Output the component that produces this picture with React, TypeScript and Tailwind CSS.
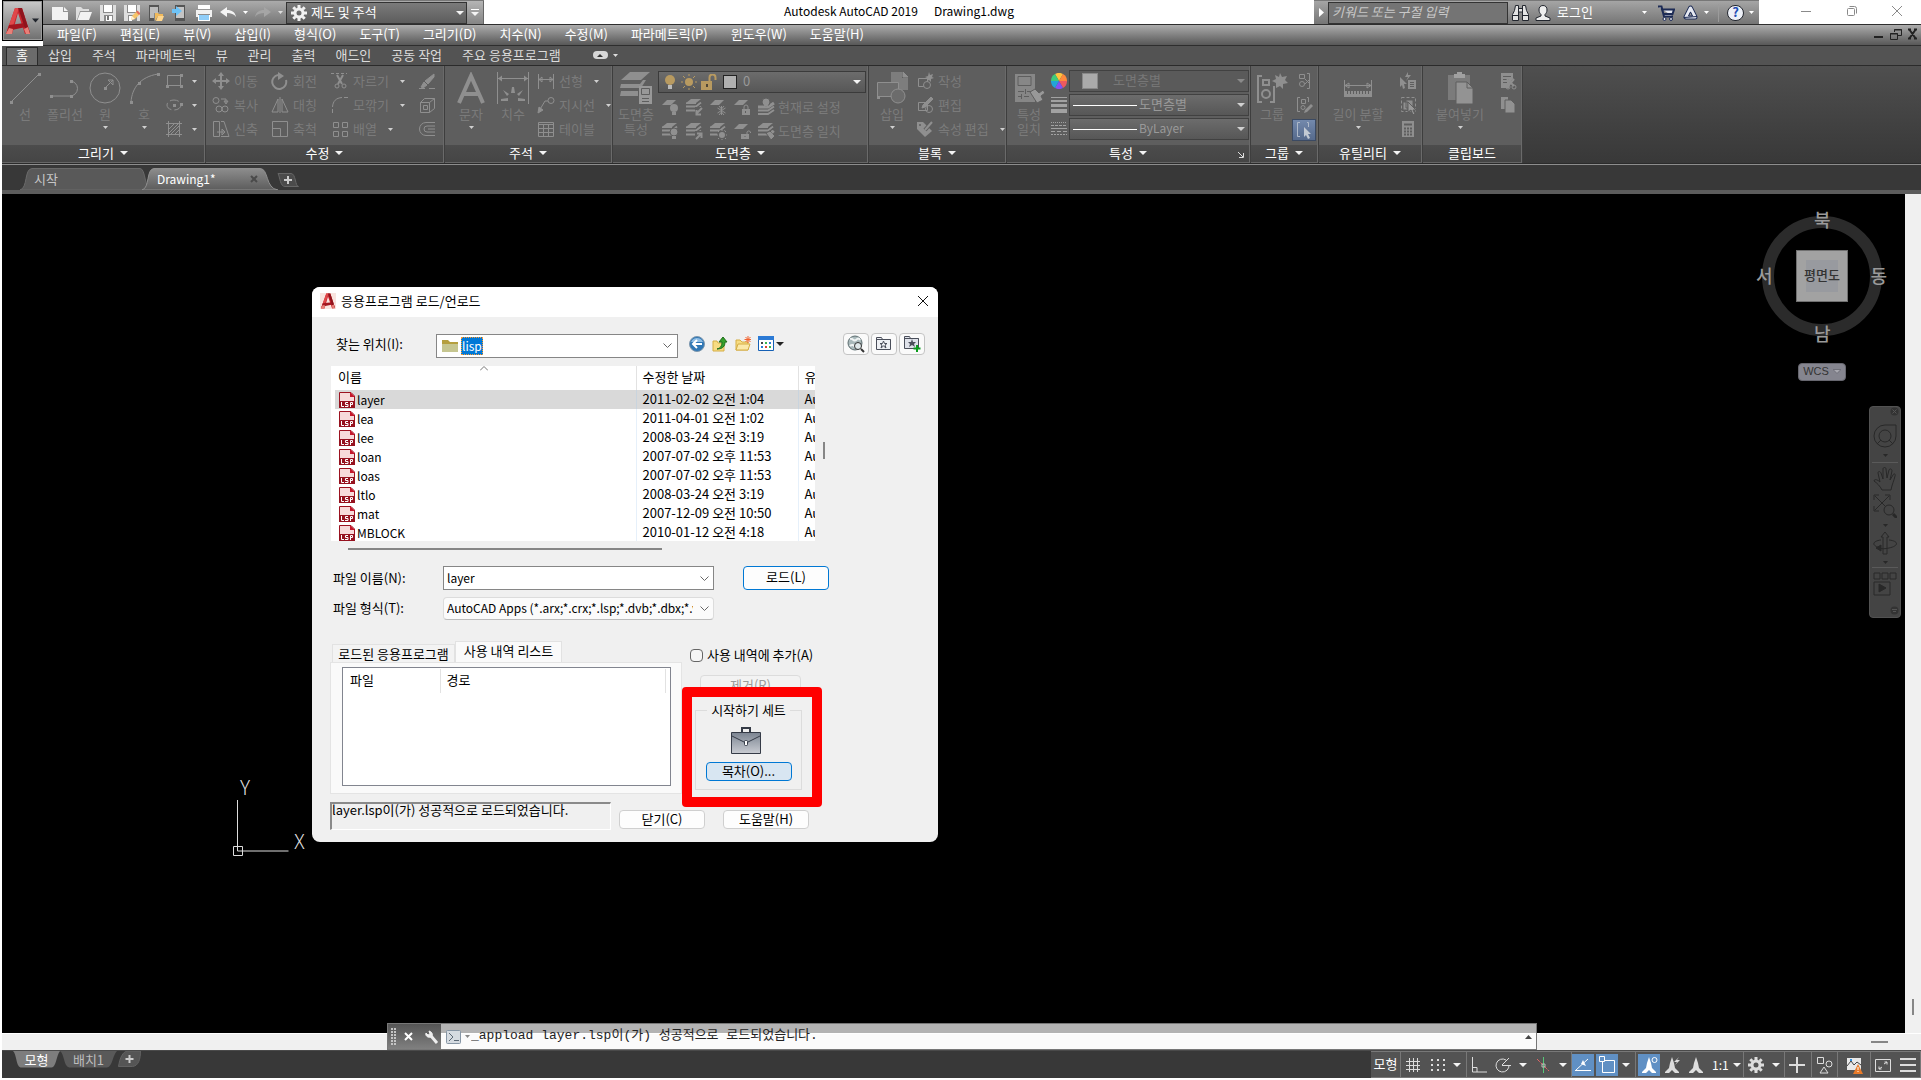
import { useState, type ReactNode } from "react";

const menus = [
  "파일(F)",
  "편집(E)",
  "뷰(V)",
  "삽입(I)",
  "형식(O)",
  "도구(T)",
  "그리기(D)",
  "치수(N)",
  "수정(M)",
  "파라메트릭(P)",
  "윈도우(W)",
  "도움말(H)",
];

const ribbonTabs = ["홈", "삽입", "주석", "파라메트릭", "뷰", "관리", "출력", "애드인", "공동 작업", "주요 응용프로그램"];

const files = [
  { name: "layer", date: "2011-02-02 오전 1:04" },
  { name: "lea", date: "2011-04-01 오전 1:02" },
  { name: "lee", date: "2008-03-24 오전 3:19" },
  { name: "loan", date: "2007-07-02 오후 11:53" },
  { name: "loas", date: "2007-07-02 오후 11:53" },
  { name: "ltlo", date: "2008-03-24 오전 3:19" },
  { name: "mat", date: "2007-12-09 오전 10:50" },
  { name: "MBLOCK", date: "2010-01-12 오전 4:18" },
];

export default function App() {
  return (
    <div className="flex h-screen flex-col overflow-hidden bg-white pb-[2px] pl-[2px] font-['Noto_Sans_CJK_KR',sans-serif] text-[13px] leading-4 text-black">
      <Header />
      <RibbonTabs />
      <Ribbon />
      <DocTabs />
      <div className="relative flex min-h-0 flex-1 flex-col">
        <div className="flex min-h-0 flex-1">
          <main className="relative min-w-0 flex-1 overflow-hidden bg-black">
            <UcsIcon />
            <AppLoadDialog />
            <ViewCube />
            <NavBar />
          </main>
          <div className="flex w-4 flex-col items-center justify-end bg-[#f0f0f0] pb-[18px]">
            <div className="h-4 w-[2px] bg-[#868686]" />
          </div>
        </div>
        <div className="flex h-[17px] items-center justify-end border-t border-white bg-[#f0f0f0] pr-[33px]">
          <div className="h-[2px] w-[17px] bg-[#868686]" />
        </div>
        <CommandLine />
      </div>
      <StatusBar />
    </div>
  );
}

/* ---------- title bar and menus ---------- */

function Header() {
  return (
    <header className="flex shrink-0">
      <button
        aria-label="응용프로그램 메뉴"
        className="flex h-[41px] w-[41px] items-center justify-center gap-[2px] border border-black bg-linear-to-b from-[#c9c9c9] to-[#6f6f6f] outline outline-1 -outline-offset-2 outline-[#9a9a9a]"
      >
        <LogoA className="h-7 w-6" />
        <svg className="h-[5px] w-[7px]" viewBox="0 0 7 5">
          <path d="M0 .5h7L3.500 4.500z" fill="#20242c" />
        </svg>
      </button>
      <div className="min-w-0 flex-1">
        <div className="flex h-6 items-stretch">
          <QuickAccess />
          <div className="flex flex-1 items-center justify-center gap-4 pb-[2px] text-xs">
            <span>Autodesk AutoCAD 2019</span>
            <span>Drawing1.dwg</span>
          </div>
          <InfoCenter />
          <div className="flex w-[162px] items-center justify-between pr-[18px] pb-[2px] pl-[41px] text-[#8a8a8a]">
            <button aria-label="최소화">
              <svg className="h-3 w-3" viewBox="0 0 12 12" stroke="currentColor">
                <path d="M1 6.500h10" />
              </svg>
            </button>
            <button aria-label="이전 크기로 복원">
              <svg className="h-3 w-3" viewBox="0 0 12 12" fill="none" stroke="currentColor">
                <rect x="1.500" y="3.500" width="7" height="7" rx="1" />
                <path d="M3.500 1.500h5a2 2 0 0 1 2 2v5" />
              </svg>
            </button>
            <button aria-label="닫기">
              <svg className="h-3 w-3" viewBox="0 0 12 12" stroke="currentColor">
                <path d="M1 1l10 10M11 1L1 11" />
              </svg>
            </button>
          </div>
        </div>
        <div className="flex h-[22px] items-center border-y border-[#2e2e2e] bg-linear-to-b from-[#adadad] to-[#585858] pr-[2px] pb-[2px] pl-[14px] text-white">
          <nav className="flex flex-1 gap-[23px]">
            {menus.map((m) => (
              <button key={m}>{m}</button>
            ))}
          </nav>
          <div className="flex items-center gap-[5px] text-[#222]">
            <button aria-label="도면 최소화">
              <svg className="h-3 w-3" viewBox="0 0 12 12" stroke="currentColor" strokeWidth="2">
                <path d="M1 9h9" />
              </svg>
            </button>
            <button aria-label="도면 복원">
              <svg className="h-3 w-3" viewBox="0 0 12 12" fill="none" stroke="currentColor">
                <path d="M4.500 4V1.500h7v6H8M4 2h8M.5 5.500h7v6h-7zM0 6h8" />
              </svg>
            </button>
            <button aria-label="도면 닫기">
              <svg className="h-3 w-3" viewBox="0 0 12 12" stroke="currentColor" strokeWidth="2">
                <path d="M2 1l7 10M9 1l-7 10M1 1.500h3M7 1.500h3M1 10.500h3M7 10.500h3" />
              </svg>
            </button>
          </div>
        </div>
      </div>
    </header>
  );
}

function QuickAccess() {
  return (
    <div className="flex items-center border-t border-[#777] bg-linear-to-b from-[#ababab] to-[#777] pl-[5px] text-[#f2f2f2]">
      <QaButton label="새로 만들기">
        <path d="M0 2h11v5h5v8H0zM12 2l4 4h-4z" fill="currentColor" />
      </QaButton>
      <QaButton label="열기">
        <path d="M0 2h5l2 2h6v2H4L1 15H0z" fill="#ddd" />
        <path d="M4.500 7H16l-3 8H1.500z" fill="currentColor" />
      </QaButton>
      <QaButton label="저장">
        <path d="M0 0h16v16H0z" fill="#dedede" />
        <path d="M3 0h10v8H3zM4 10h9v6H4z" fill="#8b8b8b" />
        <path d="M4 0h8v7H4zM6 11h6v5H6z" fill="#fff" />
        <path d="M7 11h2v4H7z" fill="#777" />
      </QaButton>
      <QaButton label="다른 이름으로 저장">
        <path d="M0 0h16v16H0z" fill="#dedede" />
        <path d="M3 0h10v8H3zM4 10h9v6H4z" fill="#8b8b8b" />
        <path d="M4 0h8v7H4zM5 11h3v5H5z" fill="#fff" />
        <path d="M7 15l1-4 5-5 3 3-5 5z" fill="#f5c469" />
        <path d="M7 15l1-4 3 3z" fill="#fff2d8" />
        <path d="M12 7l1.500-1.500 3 3L15 10z" fill="#e26b5b" />
      </QaButton>
      <QaButton label="웹 및 모바일에서 열기">
        <path d="M1 0h10v7H6v9H1z" fill="#555" />
        <path d="M2 2h8v6H6v5H2z" fill="#bdbdbd" />
        <path d="M7 8h3l1 1h4v2h-5l-3 5z" fill="#f0b95a" />
        <path d="M10 11h6l-2 5H8z" fill="#ffd68d" />
      </QaButton>
      <QaButton label="웹 및 모바일에 저장">
        <path d="M3 0h10v16H3z" fill="#555" />
        <path d="M4 2h8v11H4z" fill="#c4c4c4" />
        <path d="M0 4h4V1l6 5-6 5V8H0z" fill="#6ec3f7" />
      </QaButton>
      <QaButton label="플롯">
        <path d="M2 0h12v4H2z" fill="#fff" />
        <path d="M0 5h16v7h-2V9H2v3H0z" fill="#f2f2f2" />
        <path d="M2 10h12v6H2z" fill="#fff" />
        <path d="M3 10h10v5H3z" fill="#8fcdf8" />
      </QaButton>
      <QaButton label="명령 취소">
        <path d="M0 7l7-5v3c5 0 8 2 9 7-2-3-5-4-9-4v4z" fill="#f4f4f4" />
      </QaButton>
      <Caret className="mx-[2px] text-white" />
      <QaButton label="명령 복구">
        <path d="M16 7L9 2v3C4 5 1 7 0 12c2-3 5-4 9-4v4z" fill="#a5a5a5" />
      </QaButton>
      <Caret className="mx-[2px] text-[#ddd]" />
      <div className="flex h-[22px] w-[181px] items-center border border-[#333] bg-linear-to-b from-[#7b7b7b] to-[#5d5d5d] pr-[2px] pl-1">
        <Gear className="h-4 w-4 shrink-0" />
        <select aria-label="작업공간" className="min-w-0 flex-1 appearance-none bg-transparent pb-[2px] pl-1 text-white outline-none">
          <option>제도 및 주석</option>
        </select>
        <WideCaret />
      </div>
      <button aria-label="신속 접근 도구막대 사용자화" className="flex h-full w-[17px] flex-col items-center justify-center gap-[2px] border-r border-[#666] bg-linear-to-b from-[#b5b5b5] to-[#858585]">
        <span className="h-px w-2 bg-white" />
        <WideCaret />
      </button>
    </div>
  );
}

function QaButton({ label, children }: { label: string; children: ReactNode }) {
  return (
    <button aria-label={label} className="flex w-6 justify-center">
      <svg className="h-4 w-4" viewBox="0 0 16 16">
        {children}
      </svg>
    </button>
  );
}

function InfoCenter() {
  return (
    <div className="flex items-center border-t border-[#777] bg-linear-to-b from-[#a5a5a5] to-[#757575]">
      <span className="flex w-[14px] justify-center">
        <svg className="h-[9px] w-[5px]" viewBox="0 0 5 9">
          <path d="M0 0l5 4.500L0 9z" fill="#fff" />
        </svg>
      </span>
      <input
        aria-label="검색"
        placeholder="키워드 또는 구절 입력"
        className="h-[22px] w-[180px] border border-[#333] bg-[#747474] px-[3px] pb-[2px] text-white italic outline-none placeholder:text-[#c8c8c8]"
      />
      <button aria-label="찾기" className="ml-1">
        <svg className="h-4 w-[17px]" viewBox="0 0 17 16" fill="#e4e4e4" stroke="#22262e">
          <path d="M3.500.5h3v3h4v-3h3l1 5 2 4v6h-6V7h-4v8.500h-6v-6l2-4z" />
          <path d="M1 10.500h5M11 10.500h5M6.500 3v5M10.500 3v5" />
        </svg>
      </button>
      <button className="ml-[6px] flex w-[121px] items-center gap-[6px] text-white">
        <svg className="h-4 w-4" viewBox="0 0 16 16" fill="#eee" stroke="#22262e">
          <path d="M8 .5c3 0 4 2 4 4.500 0 2-1 3.500-2 4.500v1.500l5 2v2.500H1V13l5-2V9.500C5 8.500 4 7 4 5 4 2.500 5 .5 8 .5z" />
        </svg>
        <span className="flex-1 pb-[2px] text-left">로그인</span>
        <Caret className="mr-2" />
      </button>
      <button aria-label="Autodesk App Store" className="ml-[2px]">
        <svg className="h-4 w-[17px]" viewBox="0 0 17 16" fill="none" stroke="#1d2b55">
          <path d="M0 1.500h3.500L6 11.500h9M4 4.500h12L14.500 9H5.500z" fill="#e6e9f2" strokeWidth="2" />
          <circle cx="6.500" cy="14" r="1.500" fill="#e6e9f2" />
          <circle cx="13" cy="14" r="1.500" fill="#e6e9f2" />
        </svg>
      </button>
      <button aria-label="연결된 상태 유지" className="ml-[7px] flex items-center gap-1 text-white">
        <svg className="h-4 w-[17px]" viewBox="0 0 17 16" fill="none" stroke="#1d2b55" strokeLinejoin="round">
          <path d="M8.500 3L4 12h9z" strokeWidth="5" />
          <path d="M8.500 3L4 12h9z" stroke="#e6e9f2" strokeWidth="3" />
          <path d="M2 12.500l13-1" strokeWidth="1" />
          <path d="M8.500 7l-2 4h4z" fill="#9a9a9a" />
        </svg>
        <Caret />
      </button>
      <span className="mr-2 ml-2 h-[18px] w-px bg-[#9b9b9b]" />
      <button aria-label="도움말" className="flex items-center gap-1 pr-1 text-white">
        <span className="flex h-4 w-[17px] items-center justify-center rounded-full border border-[#22262e] bg-[#eef1f8] pb-px text-[13px] font-bold text-[#1f4fb5]">?</span>
        <Caret />
      </button>
    </div>
  );
}

/* ---------- ribbon ---------- */

function RibbonTabs() {
  const [tab, setTab] = useState("홈");
  return (
    <nav className="flex h-5 shrink-0 items-end border-b border-[#2b2b2b] bg-[#535353] pl-1 text-[#dcdcdc]">
      {ribbonTabs.map((t) => (
        <button
          key={t}
          onClick={() => setTab(t)}
          className={
            t === tab
              ? "h-[18px] border border-b-0 border-[#2b2b2b] bg-[#6b6b6b] px-[9px] pb-[3px] leading-[14px] text-white"
              : "h-[18px] px-[10px] pb-[3px] leading-[15px]"
          }
        >
          {t}
        </button>
      ))}
      <button aria-label="패널 최소화" className="ml-[22px] flex h-[18px] items-center gap-1 pb-[2px]">
        <span className="flex h-2 w-[15px] items-center justify-center rounded-sm bg-[#d6d6d6]">
          <svg className="h-[3px] w-[6px]" viewBox="0 0 6 3">
            <path d="M0 3l3-3 3 3z" fill="#333" />
          </svg>
        </span>
        <Caret />
      </button>
    </nav>
  );
}

function Ribbon() {
  return (
    <section className="flex h-[99px] shrink-0 border-b border-[#8d8d8d] bg-linear-to-b from-[#4f4f4f] to-[#383838] text-[#7b7b7b] shadow-[inset_0_-1px_0_#2b2b2b]">
      <Panel title="그리기" className="w-[203px] pl-[3px]">
        <Big label="선" className="w-10">
          <path d="M2 30L30 2" />
          <Dots at={[[2, 30], [30, 2]]} />
        </Big>
        <Big label="폴리선" className="w-10">
          <path d="M1 24h20a7.500 7.500 0 0 0 0-15" />
          <Dots at={[[2, 24], [22, 24], [22, 9]]} />
        </Big>
        <Big label="원" className="w-10" menu>
          <circle cx="16" cy="16" r="15" />
          <path d="M16 16l8-8M19 8h5v5z" />
          <Dots at={[[16, 16]]} />
        </Big>
        <Big label="호" className="w-[38px]" menu>
          <path d="M3 30C4 16 12 5 30 2" />
          <Dots at={[[3, 30], [11, 11], [30, 2]]} />
        </Big>
        <Rows>
          <Small menu>
            <path d="M2.500 3.500h13v10h-13z" />
            <Dots at={[[2, 14], [16, 14], [16, 3]]} />
          </Small>
          <Small menu>
            <ellipse cx="9" cy="9" rx="7" ry="5" strokeDasharray="9 3" />
            <Dots at={[[9, 9], [16, 8]]} />
          </Small>
          <Small menu>
            <path d="M3.500 1v16M14.500 1v16M1 3.500h16M1 14.500h16M4 9l5-5M4 13l9-9M6 14l8-8M10 14l4-4" />
          </Small>
        </Rows>
      </Panel>

      <Panel title="수정" className="w-[238px] pl-1">
        <Rows className="w-[59px]">
          <Small label="이동">
            <path d="M9 2v14M2 9h14" strokeWidth="2" />
            <path d="M9 0l3 4H6zM9 18l3-4H6zM0 9l4-3v6zM18 9l-4-3v6z" fill="currentColor" stroke="none" />
          </Small>
          <Small label="복사">
            <circle cx="4" cy="4.500" r="3" />
            <circle cx="7" cy="13" r="3" />
            <circle cx="13" cy="13" r="3" />
            <path d="M9 3h5v4M12 5l2 3 2-3z" />
          </Small>
          <Small label="신축">
            <path d="M1.500 1.500h6v15h-6zM9 1.500h3l5 15H9M5 12h7M10 9l3 3-3 3z" />
          </Small>
        </Rows>
        <Rows className="w-[60px]">
          <Small label="회전">
            <path d="M7 3a7 7 0 1 0 8 5" strokeWidth="2" />
            <path d="M7 0l6 4-6 4z" fill="currentColor" stroke="none" />
          </Small>
          <Small label="대칭">
            <path d="M7 3v13H1zM11 3v13h6zM9 1v16" />
          </Small>
          <Small label="축척">
            <path d="M1.500 1.500h15v15h-15zM1.500 8.500h8v8" />
          </Small>
        </Rows>
        <Rows className="w-[87px]">
          <Small label="자르기" menu>
            <path d="M0 1.500h16" strokeDasharray="3 2" />
            <path d="M6 3l5 9M12 3l-5 9" strokeWidth="2" />
            <circle cx="6" cy="14" r="2" />
            <circle cx="13" cy="14" r="2" />
          </Small>
          <Small label="모깎기" menu>
            <path d="M1.500 17v-4M1.500 11C2 5 5 2 11 1.500M13 1.500h4" />
          </Small>
          <Small label="배열" menu>
            <path d="M2.500 2.500h5v5h-5zM11.500 2.500h5v5h-5zM2.500 11.500h5v5h-5zM11.500 11.500h5v5h-5z" />
          </Small>
        </Rows>
        <Rows>
          <Small>
            <path d="M1 16.500h6M11 16.500h6" />
            <path d="M16 2v3l-6 7-3-3zM6 10l3 3-4 3-2-1z" fill="currentColor" />
          </Small>
          <Small>
            <path d="M2.500 6.500h9v10h-9zM2.500 6.500l4-4h10v10l-5 4M11.500 6.500l5-4M5.500 9.500h4v4h-4z" />
          </Small>
          <Small>
            <path d="M17 2.500H8a6.500 6.500 0 0 0 0 13h9M17 6H9a3 3 0 0 0 0 6h8M17 9h-7" />
          </Small>
        </Rows>
      </Panel>

      <Panel title="주석" className="w-[167px] pl-[6px]">
        <Big label="문자" className="w-10" menu>
          <path d="M4 31L16 4l12 27M8 22h16" strokeWidth="4" />
        </Big>
        <Big label="치수" className="w-[44px]">
          <path d="M.5 0v32M31.500 0v32M1 6.500h30" />
          <path d="M1 6.500l4-3v6zM31 6.500l-4-3v6zM15 15h2l1 6h-4zM6 18l6 4-2 2zM26 18l-6 4 2 2zM4 27l7-1v3H4zM28 27l-7-1v3h7z" fill="currentColor" stroke="none" />
        </Big>
        <Rows>
          <Small label="선형" menu>
            <path d="M1.500 2v15M16.500 2v15M2 7.500h14M5 5L2 7.500 5 10zM13 5l3 2.500-3 2.500z" />
          </Small>
          <Small label="지시선" menu>
            <path d="M11 5H8L2 15" />
            <circle cx="14" cy="4.500" r="3" />
            <path d="M1 17l1-6 4 3z" fill="currentColor" />
          </Small>
          <Small label="테이블">
            <path d="M1.500 2.500h15v14h-15zM1 4.500h16M1 8.500h16M1 12.500h16M6.500 5v11M11.500 5v11" />
          </Small>
        </Rows>
      </Panel>

      <Panel title="도면층" className="w-[255px] pl-px">
        <Big label="도면층" second="특성" className="w-[44px]">
          <path d="M10 0h20l-9 8H1zM1 12h19l3-4h3l-5 8H0zM1 19h17v5H0z" fill="currentColor" stroke="none" />
          <path d="M19 14h13v18H19z" fill="#989898" stroke="none" />
          <path d="M21.500 16.500h8v6h-8zM22 26.500h7M22 29.500h7" stroke="#5e5e5e" />
        </Big>
        <div>
          <label className="mt-[2px] mb-[2px] flex h-[22px] w-[208px] items-center gap-[6px] border border-[#3b3b3b] bg-linear-to-b from-[#6c6c6c] to-[#575757] px-[4px] text-[#999]">
            <svg className="h-4 w-[54px] shrink-0" viewBox="0 0 54 16">
              <circle cx="7" cy="6" r="5" fill="#b89a60" />
              <path d="M5 11h4v4H5z" fill="#bbb" />
              <circle cx="26" cy="8" r="4" fill="#b89a60" />
              <path d="M26 0v2M26 14v2M18 8h2M32 8h2M20 2l2 2M30 12l2 2M32 2l-2 2M22 12l-2 2" stroke="#b89a60" />
              <path d="M38 7h11v9H38z" fill="#b89a60" />
              <path d="M46.500 7V3.500a3 3 0 0 1 6 0V6" fill="none" stroke="#b89a60" strokeWidth="2" />
              <path d="M43 10h2v3h-2z" fill="#4f4636" />
            </svg>
            <span className="h-[14px] w-[14px] shrink-0 border border-[#222] bg-[#b0b0b0]" />
            <select aria-label="도면층" className="min-w-0 flex-1 appearance-none bg-transparent pb-[2px] outline-none">
              <option>0</option>
            </select>
            <WideCaret />
          </label>
          <LayerRow label="현재로 설정" kinds={["off", "isolate", "freeze", "lock", "current"]} />
          <LayerRow label="도면층 일치" kinds={["on", "unisolate", "thaw", "unlock", "match"]} />
        </div>
      </Panel>

      <Panel title="블록" className="w-[137px] pl-px">
        <Big label="삽입" className="w-[44px]" menu>
          <path d="M15 0h11v6h6v12H15z" fill="#7d7d7d" stroke="none" />
          <path d="M27 0l5 5h-5z" fill="currentColor" />
          <path d="M1.500 10.500h21v14h-21z" fill="#6c6c6c" />
          <circle cx="22" cy="24" r="7" fill="#6c6c6c" />
          <Dots at={[[2, 25]]} />
        </Big>
        <Rows>
          <Small label="작성">
            <path d="M2.500 6.500h9v8h-9z" />
            <circle cx="11" cy="13" r="3.500" fill="#5e5e5e" />
            <path d="M13 0l1 3 3-1-1 3 2 1-3 1v3l-2-2-2 1V6L9 5l3-1z" fill="currentColor" stroke="none" />
          </Small>
          <Small label="편집">
            <path d="M2.500 6.500h9v8h-9z" />
            <circle cx="13" cy="13" r="3.500" />
            <path d="M15 1l2 2-8 8-3 1 1-3z" fill="currentColor" />
          </Small>
          <Small label="속성 편집" menu>
            <path d="M1 2h6l9 9-7 6-8-8z" fill="currentColor" stroke="none" />
            <path d="M9 10l7-8" stroke="#5e5e5e" strokeWidth="4" />
            <path d="M9 10l7-8" strokeWidth="2" />
            <circle cx="4" cy="5" r="1" fill="#5e5e5e" stroke="none" />
          </Small>
        </Rows>
      </Panel>

      <Panel title="특성" className="w-[243px] pl-[2px]" launcher>
        <Big label="특성" second="일치" className="w-10">
          <path d="M2 2h20v28H2z" fill="#878787" stroke="none" />
          <path d="M5 4.500h13v9H5zM5 19.500h6M14 19.500h6M5 24.500h3M11 24.500h5M12.500 17v5M8.500 22v5" stroke="#5e5e5e" />
          <path d="M17 20l5-3 4 4 4-3 2 3-4 3 2 4-6 3z" fill="#989898" stroke="#5e5e5e" />
        </Big>
        <div className="flex w-5 flex-col">
          <span className="flex h-6 items-center justify-center">
            <svg className="h-4 w-4" viewBox="0 0 16 16">
              <path d="M8 8L4 1a8 8 0 0 1 8 0z" fill="#ffc23e" />
              <path d="M8 8l4-7a8 8 0 0 1 4 7z" fill="#ff8a3c" />
              <path d="M8 8h8a8 8 0 0 1-4 7z" fill="#ee5a5f" />
              <path d="M8 8l4 7a8 8 0 0 1-8 0z" fill="#8152f5" />
              <path d="M8 8l-4 7a8 8 0 0 1-4-7z" fill="#22a4d8" />
              <path d="M8 8H0a8 8 0 0 1 4-7z" fill="#3ecb7c" />
            </svg>
          </span>
          <span className="flex h-6 items-center justify-center">
            <svg className="h-4 w-4" viewBox="0 0 16 16" fill="#a2a2a2">
              <path d="M0 0h16v1H0zM0 3h16v2H0zM0 7h16v3H0zM0 12h16v4H0z" />
            </svg>
          </span>
          <span className="flex h-6 items-center justify-center">
            <svg className="h-4 w-4" viewBox="0 0 16 16" stroke="#a2a2a2">
              <path d="M0 1.500h16" strokeDasharray="1 1" />
              <path d="M0 4.500h16" strokeDasharray="3 1" />
              <path d="M0 7.500h16" />
              <path d="M0 10.500h16" strokeDasharray="4 2" />
              <path d="M0 13.500h16" strokeDasharray="2 1" />
            </svg>
          </span>
        </div>
        <div className="flex flex-col gap-[2px] pt-px">
          <PropertySelect label="객체 색상" value="도면층별" dim />
          <PropertySelect label="선가중치" value="도면층별" />
          <PropertySelect label="선종류" value="ByLayer" latin />
        </div>
      </Panel>

      <Panel title="그룹" className="w-[67px] pl-px">
        <Big label="그룹" className="w-10">
          <path d="M6 4H2v26h4M14 30h4V14" strokeWidth="2" />
          <path d="M7 8h6v5H7z" strokeWidth="2" />
          <circle cx="10" cy="22" r="4" strokeWidth="2" />
          <path d="M24 1l2 4 5-1-2 4 3 3-5 1v5l-3-3-4 2v-5l-4-2 4-2-1-4 4 2z" fill="currentColor" stroke="none" />
        </Big>
        <Rows>
          <Small wide>
            <path d="M4.500 2.500h5v4h-5z" />
            <circle cx="7" cy="12" r="2.500" />
            <path d="M12 1.500h2.500v15H12M10 7l5 5M15 7l-5 5" />
          </Small>
          <Small wide>
            <path d="M5 1.500H2.500v14H5M6.500 3.500h4v4h-4z" />
            <circle cx="8" cy="11.500" r="2" />
            <path d="M12 1.500h1.500V6" />
            <path d="M16 8l2 2-6 6-3 1 1-3z" fill="currentColor" stroke="none" />
          </Small>
          <Small wide active>
            <path d="M5 1.500H2.500v14H5M12 1.500h1.500V6" stroke="#aeb9c9" />
            <path d="M9 6l7 7h-3l2 4-2 1-2-4-2 2z" fill="#c3cad4" stroke="none" />
          </Small>
        </Rows>
      </Panel>

      <Panel title="유틸리티" className="w-[103px] pl-px">
        <Big label="길이 분할" className="w-[76px]" menu>
          <path d="M2.500 8v11M29.500 8v11M3 13.500h26M7 11l-4 2.500L7 16zM25 11l4 2.500L25 16z" />
          <path d="M2 19h28v6H2z" fill="currentColor" stroke="none" />
          <path d="M5.500 19v3M8.500 19v3M11.500 19v3M14.500 19v3M17.500 19v3M20.500 19v3M23.500 19v3M26.500 19v3" stroke="#5e5e5e" />
        </Big>
        <Rows>
          <Small wide>
            <path d="M1 5l7 7H5l1 4-2 1-1-4-2 2zM9 0L6 5h3L7 9l5-6H9z" fill="currentColor" stroke="none" />
            <path d="M9 8h8v9H9z" fill="currentColor" stroke="none" />
            <path d="M11 10.500h4M11 12.500h4M11 14.500h4" stroke="#5e5e5e" />
          </Small>
          <Small wide>
            <path d="M2.500 1.500h14v14h-14z" strokeDasharray="3 2" />
            <path d="M4 6h5v8H4zM7 4h7v8H7z" fill="currentColor" stroke="#5e5e5e" />
            <path d="M9 6l8 8h-3l2 4-2 1-2-5-3 2z" fill="#999" stroke="#5e5e5e" />
          </Small>
          <Small wide>
            <path d="M3 1h12v16H3z" fill="currentColor" stroke="none" />
            <path d="M5 4.500h8" stroke="#5e5e5e" strokeWidth="2" />
            <path d="M5 8.500h8M5 11.500h8M5 14.500h8" stroke="#5e5e5e" strokeWidth="2" strokeDasharray="2 1" />
          </Small>
        </Rows>
      </Panel>

      <Panel title="클립보드" className="w-[99px] pl-px" fixed>
        <Big label="붙여넣기" className="w-[72px]" menu>
          <path d="M4 3h22v25H4z" fill="#7b7b7b" stroke="none" />
          <path d="M10 2h3V0h5v2h3v4H10z" fill="#a0a0a0" stroke="none" />
          <path d="M12 10h11l6 6v16H12z" fill="#939393" stroke="#5e5e5e" />
          <path d="M23 10v6h6" stroke="#5e5e5e" />
        </Big>
        <Rows>
          <Small wide>
            <path d="M2 1h12v6l-4 4v5H2z" fill="currentColor" stroke="none" />
            <path d="M4 4.500h8M4 7.500h6M4 10.500h4" stroke="#5e5e5e" />
            <path d="M8 7l7 7M15 7l-6 7" strokeWidth="2" />
            <circle cx="9" cy="15" r="2" />
            <circle cx="15" cy="15" r="2" />
          </Small>
          <Small wide>
            <path d="M2 1h7v12H2z" fill="currentColor" stroke="none" />
            <path d="M6 4h6l4 4v9H6z" fill="#929292" stroke="#5e5e5e" />
          </Small>
        </Rows>
      </Panel>
    </section>
  );
}

function Panel({
  title,
  className,
  children,
  launcher,
  fixed,
}: {
  title: string;
  className: string;
  children: ReactNode;
  launcher?: boolean;
  fixed?: boolean;
}) {
  return (
    <div className="mb-px flex shrink-0 flex-col border-r border-[#3e3e3e] bg-[#5e5e5e] shadow-[inset_-1px_0_0_#6a6a6a]">
      <div className={`flex flex-1 pt-[3px] ${className}`}>{children}</div>
      <button className="relative mr-px flex h-[18px] items-center justify-center gap-[6px] border-b border-[#666] bg-linear-to-b from-[#4c4c4c] to-[#454545] pb-px leading-[14px] text-white">
        <span className="pb-px">{title}</span>
        {fixed ? null : <WideCaret />}
        {launcher ? (
          <svg className="absolute right-[5px] bottom-[4px] h-[6px] w-[6px]" viewBox="0 0 6 6" fill="none" stroke="#ddd">
            <path d="M0 0l5 5M1 5.500h4.500V1" />
          </svg>
        ) : null}
      </button>
    </div>
  );
}

function Big({
  label,
  second,
  menu,
  className,
  children,
}: {
  label: string;
  second?: string;
  menu?: boolean;
  className: string;
  children: ReactNode;
}) {
  return (
    <button className={`flex flex-col items-center justify-start pt-[3px] leading-[15px] whitespace-nowrap ${className}`}>
      <svg className="mb-[2px] h-8 w-8 text-[#8f8f8f]" viewBox="0 0 32 32" fill="none" stroke="currentColor">
        {children}
      </svg>
      {label}
      {second ? <span>{second}</span> : null}
      {menu ? <Caret className="mt-[5px] text-[#d0d0d0]" /> : null}
    </button>
  );
}

function Rows({ className = "", children }: { className?: string; children: ReactNode }) {
  return <div className={`flex shrink-0 flex-col ${className}`}>{children}</div>;
}

function Small({
  label,
  menu,
  wide,
  active,
  children,
}: {
  label?: string;
  menu?: boolean;
  wide?: boolean;
  active?: boolean;
  children: ReactNode;
}) {
  return (
    <button
      className={`flex items-center gap-1 whitespace-nowrap ${wide ? "w-6 justify-center" : "pl-[2px]"} ${
        active ? "mt-[2px] h-[22px] border border-[#3b4a63] bg-linear-to-b from-[#7389ac] to-[#566a8c]" : "h-6"
      }`}
    >
      <svg className="h-[18px] w-[18px] shrink-0 text-[#8f8f8f]" viewBox="0 0 18 18" fill="none" stroke="currentColor">
        {children}
      </svg>
      {label ? <span className="pb-px">{label}</span> : null}
      {menu ? <Caret className={label ? "ml-[6px] text-[#d0d0d0]" : "ml-1 text-[#d0d0d0]"} /> : null}
    </button>
  );
}

function LayerRow({ label, kinds }: { label: string; kinds: string[] }) {
  return (
    <div className="flex h-6 items-center">
      {kinds.map((k) => (
        <button key={k} aria-label={k} className="flex w-6 justify-center">
          <svg className="h-[18px] w-[18px] text-[#909090]" viewBox="0 0 18 18" fill="currentColor">
            <LayerGlyph kind={k} />
          </svg>
        </button>
      ))}
      <span className="pb-px">{label}</span>
    </div>
  );
}

function LayerGlyph({ kind }: { kind: string }) {
  const single = <path d="M6 2h9l-5 5H1z" />;
  const stack = (
    <g>
      <path d="M6 1h10l-5 4H1z" />
      <path d="M1 8.500h10l5-4M1 12.500h10l5-4M1 5.500h10" fill="none" stroke="currentColor" strokeWidth="2" />
      <path d="M1 6.500h10l5-4M1 10.500h10l5-4" fill="none" stroke="#5e5e5e" />
    </g>
  );
  switch (kind) {
    case "off":
      return (
        <>
          {single}
          <circle cx="13" cy="10" r="4" />
          <path d="M11 14h4v3h-4z" />
        </>
      );
    case "on":
      return (
        <>
          {stack}
          <circle cx="13" cy="10" r="4" stroke="#5e5e5e" />
          <path d="M11 14h4v3h-4z" />
        </>
      );
    case "isolate":
      return (
        <>
          {stack}
          <path d="M10 9h8v9h-8z" fill="#5e5e5e" />
          <path d="M17 10l-5 5M11.500 12v4.500H16" fill="none" stroke="currentColor" strokeWidth="2" />
        </>
      );
    case "unisolate":
      return (
        <>
          {stack}
          <path d="M10 9h8v9h-8z" fill="#5e5e5e" />
          <path d="M11 17l5-5M12 11.500h4.500V16" fill="none" stroke="currentColor" strokeWidth="2" />
        </>
      );
    case "freeze":
      return (
        <>
          {single}
          <path d="M12.500 8v9M8.500 10l8 5M16.500 10l-8 5M10 8l2.500 3L15 8M10 17l2.500-3 2.500 3" fill="none" stroke="currentColor" />
        </>
      );
    case "thaw":
      return (
        <>
          {stack}
          <circle cx="13" cy="13" r="5" fill="#5e5e5e" />
          <circle cx="13" cy="13" r="3" />
          <path d="M13 8v1M13 17v1M8 13h1M17 13h1M10 10l-1-1M16 16l1 1M16 10l1-1M10 16l-1 1" stroke="currentColor" />
        </>
      );
    case "lock":
      return (
        <>
          {single}
          <path d="M9 11h8v6H9z" />
          <path d="M11 11V9a2 2 0 0 1 4 0v2" fill="none" stroke="currentColor" />
          <path d="M12.500 13v2" stroke="#5e5e5e" />
        </>
      );
    case "unlock":
      return (
        <>
          {single}
          <path d="M8 12h8v5H8z" />
          <path d="M14 12v-2a2 2 0 0 1 3.500 0v1" fill="none" stroke="currentColor" />
          <path d="M12 14v1" stroke="#5e5e5e" />
        </>
      );
    case "current":
      return (
        <>
          <path d="M1 9h10l6-4" fill="none" stroke="currentColor" strokeWidth="3" />
          <path d="M1 12.500h10l6-4M1 16h10l6-4" fill="none" stroke="currentColor" strokeWidth="2" />
          <circle cx="9" cy="4" r="4" stroke="#5e5e5e" />
          <path d="M6 7h6l-3 2z" />
        </>
      );
    default:
      return (
        <>
          {stack}
          <path d="M9 11l4-2 5 5-4 4z" stroke="#5e5e5e" />
          <path d="M15 11l2-2" stroke="currentColor" strokeWidth="2" />
        </>
      );
  }
}

function PropertySelect({ label, value, dim, latin }: { label: string; value: string; dim?: boolean; latin?: boolean }) {
  return (
    <div
      className={`flex h-[22px] w-[180px] items-center border border-[#414141] px-[3px] ${
        dim ? "bg-[#5a5a5a] text-[#777]" : "bg-linear-to-b from-[#6c6c6c] to-[#575757] text-[#999]"
      }`}
    >
      {dim ? <span className="mx-[9px] h-4 w-4 border border-[#888] bg-[#aaa]" /> : <span className="h-px w-16 bg-white" />}
      <select
        aria-label={label}
        className={`min-w-0 flex-1 appearance-none bg-transparent pb-[2px] outline-none ${latin ? "text-xs" : ""} ${dim ? "pl-[6px]" : "pl-[2px]"}`}
      >
        <option>{value}</option>
      </select>
      <WideCaret className={dim ? "text-[#8a8a8a]" : "text-[#d0d0d0]"} />
    </div>
  );
}

/* ---------- drawing tabs ---------- */

function DocTabs() {
  return (
    <div className="flex h-[29px] shrink-0 items-end border-b-4 border-[#5c5c5c] bg-[#383838] pl-[18px] text-[#c6c6c6]">
      <button className="relative h-[22px] w-[122px] pl-[14px] text-left">
        <svg className="absolute top-0 left-0 h-[22px] w-[132px]" viewBox="0 0 132 22" preserveAspectRatio="none">
          <path d="M0 22C8 20 4 1 12 .5h108c6 0 4 21 12 21.500z" fill="#595959" stroke="#6a6a6a" />
        </svg>
        <span className="relative">시작</span>
      </button>
      <button className="relative h-[22px] w-[135px] pl-[15px] text-left text-xs text-white">
        <svg className="absolute top-0 left-0 h-[22px] w-[136px]" viewBox="0 0 136 22" preserveAspectRatio="none">
          <defs>
            <linearGradient id="tab" x1="0" x2="0" y1="0" y2="1">
              <stop offset="0" stopColor="#8d8d8d" />
              <stop offset="1" stopColor="#5c5c5c" />
            </linearGradient>
          </defs>
          <path d="M0 22C8 20 4 1 12 .5h106c9 0 5 20 18 21.500z" fill="url(#tab)" stroke="#8f8f8f" />
          <path d="M109 8l6 6M115 8l-6 6" stroke="#4a4a4a" strokeWidth="2" />
        </svg>
        <span className="relative">Drawing1*</span>
      </button>
      <button aria-label="새 도면" className="mb-[3px]">
        <svg className="h-[14px] w-[22px]" viewBox="0 0 22 14">
          <path d="M1 .5h13c5 0 4 13 7.500 13H8C3 13.500 3 4 1 .5z" fill="#4b4b4b" stroke="#666" />
          <path d="M11 3v8M7 7h8" stroke="#ccc" strokeWidth="2" />
        </svg>
      </button>
    </div>
  );
}

/* ---------- drawing area ---------- */

function UcsIcon() {
  return (
    <div className="absolute bottom-[172px] left-[226px] h-20 w-20 text-[20px] leading-5 font-light text-[#ddd]">
      <svg className="h-full w-full" viewBox="0 0 80 80" fill="none" stroke="#ddd">
        <path d="M9.500 19v51h51M5.500 65.500h9v9h-9z" />
      </svg>
      <span className="absolute top-[-4px] left-[12px]">Y</span>
      <span className="absolute top-[50px] left-[66px]">X</span>
    </div>
  );
}

function ViewCube() {
  return (
    <div className="absolute top-[22px] right-[18px] flex w-[130px] flex-col items-center text-[18px] leading-[18px] font-medium text-[#9a9a9a]">
      <div className="relative flex h-[120px] w-[120px] items-center justify-center rounded-full border-[12px] border-[#2b2b2b]">
        <button className="flex h-[52px] w-[52px] items-center justify-center border border-[#707070] bg-[#a2a2a2] text-[13px] text-[#333]">
          <span className="flex h-8 w-8 items-center justify-center bg-[#989a9f] pb-[2px] leading-4 whitespace-nowrap">평면도</span>
        </button>
        <span className="absolute top-[-18px] left-[40px]">북</span>
        <span className="absolute bottom-[-18px] left-[40px]">남</span>
        <span className="absolute top-[38px] left-[-18px]">서</span>
        <span className="absolute top-[38px] right-[-17px]">동</span>
      </div>
      <button className="mt-[27px] flex h-[18px] w-12 items-center justify-center gap-1 rounded-sm border border-[#67676f] bg-[#85858f] pb-[2px] font-['Liberation_Sans',sans-serif] text-[11px] font-normal text-[#333]">
        WCS
        <svg className="h-[5px] w-2" viewBox="0 0 8 5">
          <path d="M0 .5h8L4 4.500z" fill="#a8a8b0" stroke="#6f6f78" />
        </svg>
      </button>
    </div>
  );
}

function NavBar() {
  return (
    <div className="absolute top-[212px] right-1 flex h-[212px] w-8 flex-col items-center rounded-sm border border-[#525252] bg-[#444] text-[#282828]">
      <button aria-label="탐색 막대 닫기" className="mr-px self-end">
        <svg className="h-[9px] w-[9px]" viewBox="0 0 9 9">
          <circle cx="4.500" cy="4.500" r="4" fill="#333" />
          <path d="M2.500 2.500l4 4M6.500 2.500l-4 4" stroke="#555" />
        </svg>
      </button>
      <NavIcon label="스티어링 휠" className="mt-[8px]">
        <path d="M12 1h11v11a11 11 0 1 1-11-11z" />
        <circle cx="12" cy="12" r="6" />
        <path d="M8 16l-4 4M16 16l4 4" />
      </NavIcon>
      <Caret className="mt-[6px]" />
      <span className="mt-[5px] mb-1 h-px w-[26px] bg-[#5a5a5a]" />
      <NavIcon label="초점이동">
        <path d="M9 23c-2-4-5-7-8-9 0-2 3-2 6 1L5 6c0-2 2-2 3 0l2 6V2c0-2 3-2 3 0l1 9 2-8c1-2 3-1 3 1l-2 9 3-5c1-2 3-1 2 1-1 5-3 8-4 14z" />
      </NavIcon>
      <NavIcon label="줌 범위" className="mt-[3px]">
        <path d="M2 2l14 14M16 2L2 16M1 6V1h5M12 1h5v5M1 12v5h5" />
        <circle cx="16" cy="16" r="5" fill="#444" />
        <path d="M20 20l4 4" strokeWidth="3" />
      </NavIcon>
      <Caret className="mt-[6px]" />
      <NavIcon label="궤도" className="mt-1">
        <path d="M10 23V6H8l4-5 4 5h-2v17z" />
        <path d="M8 17C-2 15-1 10 8 9M16 9c10 1 10 6 0 8-4 1-8 1-11 0" />
        <path d="M3 17l5-3v6z" fill="currentColor" />
      </NavIcon>
      <Caret className="mt-[6px]" />
      <span className="mt-[3px] mb-1 h-px w-[26px] bg-[#5a5a5a]" />
      <NavIcon label="ShowMotion">
        <path d="M1 1h6v6H1zM9 1h6v6H9zM17 1h6v6h-6zM1 10h16v13H1z" />
        <path d="M6 12v8l7-4z" fill="currentColor" />
      </NavIcon>
      <button aria-label="탐색 막대 사용자화" className="mt-auto mr-px mb-[2px] self-end">
        <svg className="h-[9px] w-[9px]" viewBox="0 0 9 9">
          <circle cx="4.500" cy="4.500" r="4" fill="#333" />
          <path d="M2 3.500h5M3 5.500h3" stroke="#555" />
        </svg>
      </button>
    </div>
  );
}

function NavIcon({ label, className = "", children }: { label: string; className?: string; children: ReactNode }) {
  return (
    <button aria-label={label} className={`shrink-0 ${className}`}>
      <svg className="h-6 w-6" viewBox="0 0 24 24" fill="none" stroke="currentColor">
        {children}
      </svg>
    </button>
  );
}

/* ---------- load / unload dialog ---------- */

function AppLoadDialog() {
  const [selected, setSelected] = useState("layer");
  return (
    <section
      role="dialog"
      aria-label="응용프로그램 로드/언로드"
      className="absolute top-[93px] left-[310px] flex w-[626px] flex-col overflow-hidden rounded-lg bg-[#f0f0f0] pb-3"
    >
      <div className="flex h-[30px] items-center bg-white pr-[10px] pb-[2px] pl-2">
        <span className="flex h-4 w-4 items-center justify-center bg-[#f8e4df]">
          <LogoA className="h-4 w-[14px]" />
        </span>
        <h2 className="flex-1 pl-[5px]">응용프로그램 로드/언로드</h2>
        <button aria-label="닫기">
          <svg className="h-[10px] w-[10px]" viewBox="0 0 10 10" stroke="#111">
            <path d="M0 0l10 10M10 0L0 10" />
          </svg>
        </button>
      </div>

      <div className="flex h-[49px] items-center pt-1 pr-[13px] pl-6">
        <label htmlFor="folder" className="w-[100px] pt-px">
          찾는 위치(I):
        </label>
        <div className="mt-1 flex h-6 w-[242px] items-center border border-[#868686] bg-white px-[5px]">
          <svg className="h-[14px] w-4 shrink-0" viewBox="0 0 16 14">
            <path d="M0 1h6l2 2h8v10H0z" fill="#b59f3e" />
            <path d="M0 5h16v8H0z" fill="#c6c690" />
          </svg>
          <select
            id="folder"
            className="ml-[3px] h-[18px] w-[22px] appearance-none border border-dotted border-[#ff9a2e] bg-[#0078d7] text-xs leading-[14px] text-white outline-none"
          >
            <option>lisp</option>
          </select>
          <Chevron className="ml-auto" />
        </div>
        <div className="ml-[11px] flex items-center gap-[7px]">
          <button aria-label="뒤로">
            <svg className="h-4 w-4" viewBox="0 0 16 16">
              <circle cx="8" cy="8" r="7.500" fill="#2f77b5" stroke="#7d97ad" />
              <path d="M2 6a6.500 6.500 0 0 1 12 0z" fill="#8fbde4" />
              <path d="M13 8H5M8 4L4 8l4 4" fill="none" stroke="#fff" strokeWidth="2" />
            </svg>
          </button>
          <button aria-label="한 수준 위로">
            <svg className="h-4 w-4" viewBox="0 0 16 16">
              <path d="M1 5h4l1 2h6v8H1z" fill="#f7dc83" stroke="#d5ae45" />
              <path d="M5 13c4-1 5-4 5-7H7l4-5 4 5h-2c0 4-2 7-8 7z" fill="#35a02c" stroke="#1e6d1b" />
            </svg>
          </button>
          <button aria-label="새 폴더">
            <svg className="h-4 w-4" viewBox="0 0 16 16">
              <path d="M1 4h4l2 2h6v8H1z" fill="#f7dc83" stroke="#d5ae45" />
              <path d="M3 8h12l-2 6H1z" fill="#fbe9a9" stroke="#d5ae45" />
              <path d="M13 0v7M9.500 3.500h7M10.500 1l5 5M15.500 1l-5 5" stroke="#f3622f" />
            </svg>
          </button>
          <button aria-label="보기 메뉴" className="flex items-center gap-[2px]">
            <svg className="h-4 w-4" viewBox="0 0 16 16">
              <path d="M.5.5h15v14H.5z" fill="#fff" stroke="#1560b5" />
              <path d="M0 0h16v4H0z" fill="#2b7ad5" />
              <path d="M3 6h2v2H3z" fill="#444" />
              <path d="M7 6h2v2H7zM11 10h2v2h-2z" fill="#39b54a" />
              <path d="M11 6h2v2h-2zM3 10h2v2H3z" fill="#2b7ad5" />
              <path d="M7 10h2v2H7z" fill="#e0442e" />
            </svg>
            <svg className="h-1 w-2" viewBox="0 0 8 4">
              <path d="M0 0h8L4 4z" fill="#222" />
            </svg>
          </button>
        </div>
        <div className="ml-auto flex gap-[2px]">
          <ToolButton label="웹 검색">
            <circle cx="8" cy="8" r="7" fill="#a9b9bb" stroke="#5d6d70" />
            <path d="M3 4c3-1 4 3 6 1s3-2 4 0M3 11c2-2 4-1 5 1" fill="none" stroke="#f0f4f4" strokeWidth="2" />
            <circle cx="11" cy="11" r="3.500" fill="#dfe8ea" stroke="#333" />
            <path d="M14 14l3 3" stroke="#333" strokeWidth="2" />
          </ToolButton>
          <ToolButton label="즐겨찾기">
            <path d="M1.500 2.500h5l1 2h8v10h-14zM1.500 4.500h14" fill="#eef0f4" stroke="#4a4e5a" />
            <path d="M8.500 6l1 2.500h2.500l-2 1.500 1 3-2.500-2L6 13l1-3-2-1.500h2.500z" fill="none" stroke="#4a4e5a" />
          </ToolButton>
          <ToolButton label="즐겨찾기에 추가">
            <path d="M1.500 1.500h5l1 2h8v10h-14zM1.500 3.500h14" fill="#dfe2ea" stroke="#4a4e5a" />
            <path d="M9 4l1 3h3l-2 2 1 3-3-2-3 2 1-3-2-2h3z" fill="#4a4e5a" />
            <path d="M14 10v7M10.500 13.500h7" stroke="#0a9c1c" strokeWidth="2" />
          </ToolButton>
        </div>
      </div>

      {/* file list */}
      <div className="ml-[19px] flex">
        <div className="relative h-[175px] w-[484px] overflow-hidden bg-white">
          <table className="w-[600px] table-fixed border-collapse text-left whitespace-nowrap">
            <colgroup>
              <col className="w-1" />
              <col className="w-[301px]" />
              <col className="w-[162px]" />
              <col />
            </colgroup>
            <thead>
              <tr className="h-6">
                <th className="p-0" />
                <th className="p-0 pb-[2px] pl-[3px] font-normal">이름</th>
                <th className="border-l border-[#e2e2e2] p-0 pb-[2px] pl-[6px] font-normal">수정한 날짜</th>
                <th className="border-l border-[#e2e2e2] p-0 pb-[2px] pl-[6px] font-normal">유형</th>
              </tr>
            </thead>
            <tbody>
              {files.map((f) => (
                <tr key={f.name} onClick={() => setSelected(f.name)} className="h-[19px]">
                  <td className="p-0" />
                  <td className={f.name === selected ? "bg-[#d9d9d9] p-0" : "p-0"}>
                    <span className="flex items-center gap-[2px] pl-1 text-xs leading-4">
                      <LspIcon />
                      {f.name}
                    </span>
                  </td>
                  <td
                    className={
                      f.name === selected
                        ? "border-l border-[#c9d4de] bg-[#d9d9d9] p-0 pb-[2px] pl-[6px]"
                        : "border-l border-[#e6f0fa] p-0 pb-[2px] pl-[6px]"
                    }
                  >
                    {f.date}
                  </td>
                  <td
                    className={
                      f.name === selected
                        ? "border-l border-[#c9d4de] bg-[#d9d9d9] p-0 pb-[2px] pl-[6px]"
                        : "border-l border-[#e6f0fa] p-0 pb-[2px] pl-[6px]"
                    }
                  >
                    AutoLISP
                  </td>
                </tr>
              ))}
            </tbody>
          </table>
          <svg className="absolute top-0 left-[149px] h-[5px] w-2" viewBox="0 0 8 5" fill="none" stroke="#777">
            <path d="M0 4.500l4-4 4 4" />
          </svg>
        </div>
        <div className="mt-[76px] ml-2 h-[17px] w-[2px] bg-[#868686]" />
      </div>
      <div className="mt-[7px] ml-9 h-[2px] w-[314px] bg-[#868686]" />

      <div className="mt-[16px] flex h-6 items-center pl-[21px]">
        <label htmlFor="filename" className="w-[110px]">
          파일 이름(N):
        </label>
        <div className="flex h-6 w-[271px] items-center border border-[#868686] bg-white pr-1 pl-[3px]">
          <input id="filename" defaultValue="layer" className="min-w-0 flex-1 text-xs outline-none" />
          <Chevron />
        </div>
        <button className="ml-[29px] h-6 w-[86px] rounded-sm border border-[#0078d4] bg-[#fdfdfd] pb-[2px]">로드(L)</button>
      </div>
      <div className="mt-[6px] flex h-6 items-center pl-[21px]">
        <label htmlFor="filetype" className="w-[110px]">
          파일 형식(T):
        </label>
        <div className="flex h-[23px] w-[271px] items-center rounded-sm border border-[#dcdcdc] border-b-[#bcbcbc] bg-[#fbfbfb] pr-1 pl-[3px]">
          <select id="filetype" className="mr-[7px] min-w-0 flex-1 appearance-none overflow-hidden text-xs text-clip outline-none">
            <option>AutoCAD Apps (*.arx;*.crx;*.lsp;*.dvb;*.dbx;*.vlx;*.fas)</option>
          </select>
          <Chevron />
        </div>
      </div>

      <div className="mt-[21px] flex pl-[18px]">
        <div className="w-[352px]">
          <div role="tablist" className="flex h-[21px] items-end pl-[2px]">
            <button role="tab" className="h-[18px] w-[123px] border border-b-0 border-[#e2e2e2] bg-[#f3f3f3] whitespace-nowrap">
              로드된 응용프로그램
            </button>
            <button role="tab" aria-selected className="h-[21px] w-[107px] border border-b-0 border-[#e2e2e2] bg-[#fafafa] pb-[2px]">
              사용 내역 리스트
            </button>
          </div>
          <div className="h-[132px] border border-[#e4e4e4] bg-[#fafafa] pt-1 pl-[11px]">
            <div className="h-[119px] w-[329px] border border-[#82858f] bg-white">
              <table className="mt-px table-fixed border-collapse text-left">
                <thead>
                  <tr className="h-6">
                    <th className="w-[97px] border-r border-[#e2e2e2] p-0 pb-[2px] pl-[7px] font-normal">파일</th>
                    <th className="w-[225px] border-r border-[#e2e2e2] p-0 pb-[2px] pl-[6px] font-normal">경로</th>
                  </tr>
                </thead>
              </table>
            </div>
          </div>
        </div>

        <div className="relative w-[140px] pt-[6px] pl-2">
          <label className="flex items-center gap-1 whitespace-nowrap">
            <input type="checkbox" className="h-[13px] w-[13px] appearance-none rounded-sm border border-[#666] bg-[#f6f6f6]" />
            사용 내역에 추가(A)
          </label>
          <button disabled className="mt-[12px] ml-[10px] h-5 w-[101px] rounded-sm border border-[#dcdcdc] bg-[#f3f3f3] text-[#9b9b9b]">
            제거(R)
          </button>
          <fieldset className="mt-[7px] ml-[5px] flex h-[88px] w-[107px] flex-col items-center border border-[#dcdcdc] pt-[8px]">
            <legend className="mx-auto px-1 whitespace-nowrap">시작하기 세트</legend>
            <Briefcase />
            <button className="mt-2 h-[19px] w-[86px] shrink-0 rounded-sm border border-[#0078d4] bg-[#d8e6f2] pb-[2px] leading-[15px]">
              목차(O)...
            </button>
          </fieldset>
          <div className="pointer-events-none absolute top-[46px] left-0 h-[120px] w-[140px] rounded-sm border-[10px] border-[#ff0000]" />
        </div>
      </div>

      <div className="mt-2 flex pl-[18px]">
        <output className="h-7 w-[281px] border-t-2 border-r border-b border-l-2 border-t-[#8a8a8a] border-r-white border-b-white border-l-[#8a8a8a] leading-[12px]">
          layer.lsp이(가) 성공적으로 로드되었습니다.
        </output>
        <button className="mt-2 ml-2 h-[19px] w-[86px] rounded-sm border border-[#cfcfcf] bg-[#fdfdfd] pb-[2px] leading-[15px]">닫기(C)</button>
        <button className="mt-2 ml-[18px] h-[19px] w-[86px] rounded-sm border border-[#cfcfcf] bg-[#fdfdfd] pb-[2px] leading-[15px]">도움말(H)</button>
      </div>
    </section>
  );
}

function ToolButton({ label, children }: { label: string; children: ReactNode }) {
  return (
    <button aria-label={label} className="flex h-[22px] w-[26px] items-center justify-center rounded-sm border border-[#c4c4c4] bg-[#fafafa]">
      <svg className="h-[18px] w-[18px]" viewBox="0 0 18 18">
        {children}
      </svg>
    </button>
  );
}

function LspIcon() {
  return (
    <svg className="h-4 w-4 shrink-0" viewBox="0 0 16 16">
      <path d="M.5.5H12L15.500 4v11.500H.5z" fill="#f7dada" stroke="#9c1220" />
      <path d="M11 0l5 5h-5z" fill="#c4172b" />
      <path d="M0 9h16v7H0z" fill="#96121f" />
      <path d="M2.500 10v4.500H5M9 10.500H6.500v2H9v2H6M11.500 15v-4.500h2v2h-2" fill="none" stroke="#fff" />
    </svg>
  );
}

function Briefcase() {
  return (
    <svg className="mr-[6px] h-7 w-8 shrink-0" viewBox="0 0 32 28">
      <defs>
        <linearGradient id="case" x1="0" x2="0" y1="0" y2="1">
          <stop offset="0" stopColor="#7b8491" />
          <stop offset="1" stopColor="#c9ccd2" />
        </linearGradient>
      </defs>
      <path d="M11 6V1h10v5h-2V3h-6v3z" fill="#353b47" />
      <path d="M1.500 6.500h29v21h-29z" fill="url(#case)" stroke="#353b47" />
      <path d="M2 10l14 7 14-7" fill="none" stroke="#353b47" />
      <rect x="14.500" y="14.500" width="3" height="5" rx="1" fill="#fff" stroke="#353b47" />
    </svg>
  );
}

/* ---------- command line and status bar ---------- */

function CommandLine() {
  return (
    <div className="absolute bottom-0 left-[385px] flex h-[27px] w-[60%] max-w-[1150px] items-stretch border border-[#777] bg-white/70">
      <div className="flex w-[53px] items-center gap-2 bg-linear-to-b from-[#555] to-[#808080] pl-[3px]">
        <svg className="h-[18px] w-[5px]" viewBox="0 0 5 18" stroke="#c4c4c4" strokeWidth="2" strokeDasharray="2 1">
          <path d="M1 0v18M4 0v18" />
        </svg>
        <button aria-label="명령행 닫기">
          <svg className="h-[9px] w-[9px]" viewBox="0 0 9 9" stroke="#fff" strokeWidth="2">
            <path d="M1 1l7 7M8 1L1 8" />
          </svg>
        </button>
        <button aria-label="명령행 사용자화" className="ml-1">
          <svg className="h-[14px] w-[14px]" viewBox="0 0 14 14" fill="none" stroke="#eee">
            <path d="M6 6l6 7" strokeWidth="3" />
            <path d="M4 1l1 3-2 1-2-2c-1 3 2 5 5 4 2-1 2-5-2-6z" fill="#eee" />
          </svg>
        </button>
      </div>
      <label htmlFor="command" className="flex items-center gap-[3px] pl-[5px] text-[#888]">
        <svg className="h-[14px] w-[15px]" viewBox="0 0 15 14" fill="none" stroke="#8796a5">
          <rect x=".5" y=".5" width="14" height="13" rx="1" fill="#d5dbe1" />
          <path d="M3 3l4 4-4 4M8 10.500h5" stroke="#5a6875" />
        </svg>
        <Caret />
      </label>
      <input
        id="command"
        defaultValue="_appload layer.lsp이(가) 성공적으로 로드되었습니다."
        className="min-w-0 flex-1 bg-transparent pb-px font-['Liberation_Mono','Noto_Sans_CJK_KR',monospace] text-[#222] outline-none"
      />
      <button aria-label="명령 기록" className="pr-1">
        <svg className="h-1 w-[7px]" viewBox="0 0 7 4">
          <path d="M0 4l3.500-4L7 4z" fill="#444" />
        </svg>
      </button>
    </div>
  );
}

function StatusBar() {
  return (
    <footer className="flex h-7 shrink-0 border-t border-[#4a4a4a] bg-[#383838] text-white">
      <div className="flex flex-1 pl-[11px]">
        <LayoutTab label="모형" active className="w-[47px]" />
        <LayoutTab label="배치1" className="w-[57px]" />
        <button aria-label="새 배치" className="ml-px h-4">
          <svg className="h-4 w-[23px]" viewBox="0 0 23 16">
            <path d="M22.500 0c0 8-2 15-8 15.500H.5C2 6 5 1 9 0z" fill="#555" stroke="#626262" />
            <path d="M11.500 4v8M7.500 8h8" stroke="#ccc" strokeWidth="2" />
          </svg>
        </button>
      </div>
      <Cell className="w-[30px] justify-center">
        <button className="pb-[2px] whitespace-nowrap">모형</button>
      </Cell>
      <Cell className="w-[66px]">
        <StatusIcon label="그리드">
          <path d="M5.500 2v14M9.500 2v14M13.500 2v14M2 5.500h14M2 9.500h14M2 13.500h14" />
        </StatusIcon>
        <StatusIcon label="스냅">
          <path d="M3 4h14M3 9h14M3 14h14" strokeWidth="2" strokeDasharray="2 4" />
        </StatusIcon>
        <StatusCaret />
      </Cell>
      <Cell className="w-[105px]">
        <StatusIcon label="직교">
          <path d="M2.500 1v15H17M3 11.500h4V16" />
        </StatusIcon>
        <StatusIcon label="극좌표 추적">
          <path d="M15 9a6.500 6.500 0 1 1-3-5M8 9.500h9M8 9l7-7" />
        </StatusIcon>
        <StatusCaret />
        <StatusIcon label="등각투영">
          <path d="M3 3l12 12" stroke="#e26464" strokeDasharray="4 1" />
          <path d="M9.500 1v16" stroke="#57c777" />
          <path d="M8 8h3v3H8z" stroke="#bbb" />
        </StatusIcon>
        <StatusCaret />
      </Cell>
      <Cell className="w-[64px]">
        <StatusIcon label="객체 스냅 추적" on>
          <path d="M1 14.500h16M2 14L14 3" />
          <path d="M7 8l5 2-3-6z" fill="currentColor" stroke="none" />
        </StatusIcon>
        <span className="w-[2px]" />
        <StatusIcon label="2D 객체 스냅" on>
          <path d="M6 4.500h10.500v12h-12V6M1.500.5h5v5h-5z" />
        </StatusIcon>
        <StatusCaret />
      </Cell>
      <Cell className="w-[108px] pl-[2px]">
        <StatusIcon label="주석 가시성" on>
          <Compass />
          <circle cx="14.500" cy="4" r="2.500" />
        </StatusIcon>
        <StatusIcon label="자동 축척">
          <Compass />
          <path d="M16 1l-5 5h3l-2 3 5-5h-3z" fill="currentColor" stroke="none" />
        </StatusIcon>
        <StatusIcon label="주석 축척">
          <Compass />
        </StatusIcon>
        <button className="flex items-center gap-1 pl-1 text-xs">
          1:1
          <WideCaret />
        </button>
      </Cell>
      <Cell className="w-[41px]">
        <button aria-label="작업공간 전환" className="flex w-6 justify-center text-[#ddd]">
          <Gear className="h-4 w-4" />
        </button>
        <StatusCaret />
      </Cell>
      <Cell className="w-[27px]">
        <StatusIcon label="주석 감시">
          <path d="M9 1v16M1 9h16" strokeWidth="2" />
        </StatusIcon>
      </Cell>
      <Cell className="w-[26px]">
        <StatusIcon label="객체 분리">
          <path d="M2.500 1.500h6v6h-6zM9 11l4 6H5z" />
          <circle cx="14" cy="8" r="3" />
        </StatusIcon>
      </Cell>
      <Cell className="w-[33px] pl-[4px]">
        <StatusIcon label="하드웨어 가속">
          <path d="M2 2h14v12H2z" fill="#e8e8e8" stroke="none" />
          <path d="M2 10l4-5 3 4 3-3 4 3" stroke="#444" />
          <path d="M5 3h2v2H5z" fill="#2e8fe0" stroke="none" />
          <path d="M13 8l5 10H8z" fill="#e87a28" stroke="none" />
          <path d="M13 11v3M13 15v1" stroke="#fff" />
        </StatusIcon>
      </Cell>
      <Cell className="w-[50px] gap-px">
        <StatusIcon label="화면 정리">
          <path d="M1.500 3.500h15v12h-15zM10 8l3-2M13 6v2.500M13 6h-2.500M8 11l-3 2M5 13v-2.500M5 13h2.500" />
        </StatusIcon>
        <StatusIcon label="사용자화">
          <path d="M1 3h16M1 9h16M1 15h16" strokeWidth="2" />
        </StatusIcon>
      </Cell>
    </footer>
  );
}

function LayoutTab({ label, active, className }: { label: string; active?: boolean; className: string }) {
  return (
    <button className={`relative h-[17px] leading-[14px] ${active ? "text-white" : "text-[#bdbdbd]"} ${className}`}>
      <svg className="absolute inset-0 h-full w-full" viewBox="0 0 50 17" preserveAspectRatio="none">
        <path d="M0 0c4 3 3 15 8 16.500h33c5 0 5-12 9-16.500z" fill={active ? "#7d7d7d" : "#595959"} />
      </svg>
      <span className="relative">{label}</span>
    </button>
  );
}

function Cell({ className, children }: { className: string; children: ReactNode }) {
  return <div className={`flex shrink-0 items-center border border-l-0 border-[#787878] bg-[#535353] ${className}`}>{children}</div>;
}

function StatusIcon({ label, on, children }: { label: string; on?: boolean; children: ReactNode }) {
  return (
    <button
      aria-label={label}
      className={`flex h-[22px] shrink-0 items-center justify-center ${on ? "w-[22px] bg-[#6090c4] text-white" : "w-6 text-[#ddd]"}`}
    >
      <svg className="h-[18px] w-[18px]" viewBox="0 0 18 18" fill="none" stroke="currentColor">
        {children}
      </svg>
    </button>
  );
}

function Compass() {
  return <path d="M9 1l2 6 1 5 4 4v1h-4l-3-3-3 3H2v-1l4-4 1-5z" fill="currentColor" stroke="none" />;
}

function StatusCaret() {
  return (
    <button aria-label="옵션" className="flex w-4 justify-center">
      <WideCaret />
    </button>
  );
}

/* ---------- shared glyphs ---------- */

function Dots({ at }: { at: number[][] }) {
  return (
    <>
      {at.map(([x, y]) => (
        <rect key={`${x}-${y}`} x={x - 1} y={y - 1} width="3" height="3" fill="currentColor" stroke="none" />
      ))}
    </>
  );
}

function Caret({ className = "" }: { className?: string }) {
  return (
    <svg className={`h-[3px] w-[7px] shrink-0 ${className}`} viewBox="0 0 7 3">
      <path d="M1 0h5L3.500 3z" fill="currentColor" />
    </svg>
  );
}

function WideCaret({ className = "" }: { className?: string }) {
  return (
    <svg className={`h-1 w-2 shrink-0 ${className}`} viewBox="0 0 8 4">
      <path d="M0 0h8L4 4z" fill="currentColor" className={className ? "" : "text-[#f4f4f4]"} />
    </svg>
  );
}

function Chevron({ className = "" }: { className?: string }) {
  return (
    <svg className={`h-[5px] w-[9px] shrink-0 ${className}`} viewBox="0 0 9 5" fill="none" stroke="#666">
      <path d="M.5.5l4 4 4-4" />
    </svg>
  );
}

function Gear({ className }: { className: string }) {
  return (
    <svg className={className} viewBox="0 0 16 16" fill="none" stroke="currentColor">
      <circle cx="8" cy="8" r="4" strokeWidth="3" />
      <path d="M8 0v3M8 13v3M0 8h3M13 8h3M2.300 2.300l2 2M11.700 11.700l2 2M13.700 2.300l-2 2M4.300 11.700l-2 2" strokeWidth="3" />
    </svg>
  );
}

function LogoA({ className }: { className: string }) {
  return (
    <svg className={className} viewBox="0 0 24 28" preserveAspectRatio="none">
      <path d="M9 1h7l8 25-5 1L12 6 6 27H0z" fill="#c8242c" />
      <path d="M9 1h4L6 22l-6 5z" fill="#e0484a" />
      <path d="M3 18l16-2 1 4-19 4z" fill="#a3161f" />
      <path d="M12 1h4l8 25-4-2z" fill="#8f141c" />
      <path d="M0 27l3-6 4 1-1 5zM18 22l4-2 2 7h-4z" fill="#e88078" />
    </svg>
  );
}
